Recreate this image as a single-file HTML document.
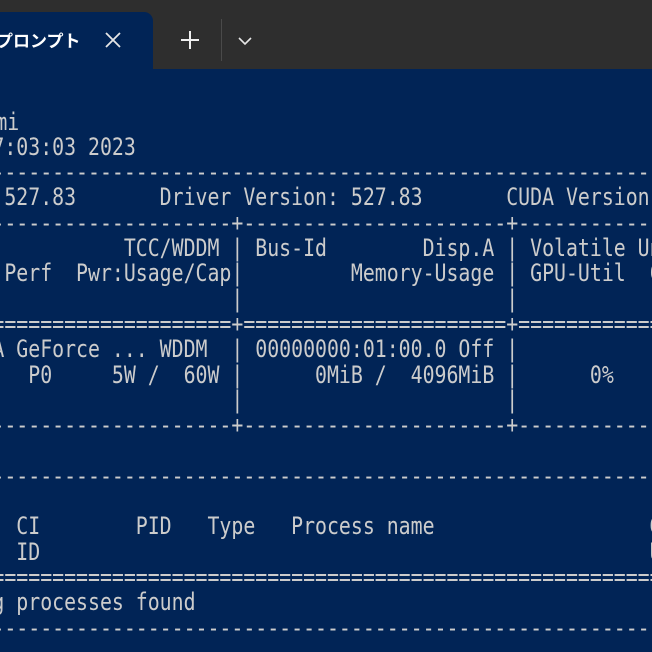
<!DOCTYPE html>
<html><head><meta charset="utf-8"><style>
html,body{margin:0;padding:0;}
body{width:652px;height:652px;overflow:hidden;background:#012456;position:relative;font-family:"DejaVu Sans Mono","Liberation Mono",monospace;}
#wrap{position:absolute;left:0;top:0;width:652px;height:652px;overflow:hidden;}
#bar{position:absolute;left:0;top:0;width:652px;height:69px;background:#2e2e2e;}
#tab{position:absolute;left:-20px;top:12px;width:173px;height:60px;background:#012456;border-radius:9px 9px 0 0;}
#title{position:absolute;left:-4px;top:28px;color:#fff;font:bold 17px "Noto Sans CJK JP",sans-serif;line-height:24px;white-space:nowrap;}
.l{position:absolute;left:-151.4px;height:25.3px;line-height:25.3px;font-size:24px;color:#cccccc;white-space:pre;transform:scaleX(0.827);transform-origin:0 0;}
</style></head><body><div id="wrap">
<div id="bar"></div>
<div id="tab"></div>
<div id="title">プロンプト</div>
<svg style="position:absolute;left:0;top:0" width="652" height="69">
<path d="M106 33 L120 47 M120 33 L106 47" stroke="#e6e6e6" stroke-width="1.8" fill="none"/>
<path d="M190 31 V49 M181 40 H199" stroke="#f0f0f0" stroke-width="2" fill="none"/>
<line x1="221.5" y1="19" x2="221.5" y2="61" stroke="#4a4a4a" stroke-width="1"/>
<path d="M239 38 L245 44 L251 38" stroke="#e6e6e6" stroke-width="1.6" fill="none"/>
</svg>
<div class="l" style="top:109.5px;left:-160px">C:\> nvidia-smi</div>
<div class="l" style="top:134.8px">Fri Mar 17 17:03:03 2023</div>
<div class="l" style="top:160.1px">+-----------------------------------------------------------------------------+</div>
<div class="l" style="top:185.4px">| NVIDIA-SMI 527.83       Driver Version: 527.83       CUDA Version: 12.0     |</div>
<div class="l" style="top:210.7px">|-------------------------------+----------------------+----------------------+</div>
<div class="l" style="top:236px">| GPU  Name            TCC/WDDM | Bus-Id        Disp.A | Volatile Uncorr. ECC |</div>
<div class="l" style="top:261.3px">| Fan  Temp  Perf  Pwr:Usage/Cap|         Memory-Usage | GPU-Util  Compute M. |</div>
<div class="l" style="top:286.6px">|                               |                      |               MIG M. |</div>
<div class="l" style="top:311.9px">|===============================+======================+======================|</div>
<div class="l" style="top:337.2px">|   0  NVIDIA GeForce ... WDDM  | 00000000:01:00.0 Off |                  N/A |</div>
<div class="l" style="top:362.5px">| N/A   45C    P0     5W /  60W |      0MiB /  4096MiB |      0%      Default |</div>
<div class="l" style="top:387.8px">|                               |                      |                  N/A |</div>
<div class="l" style="top:413.1px">+-------------------------------+----------------------+----------------------+</div>
<div class="l" style="top:463.7px">+-----------------------------------------------------------------------------+</div>
<div class="l" style="top:489px">| Processes:                                                                  |</div>
<div class="l" style="top:514.3px">|  GPU   GI   CI        PID   Type   Process name                  GPU Memory |</div>
<div class="l" style="top:539.6px">|        ID   ID                                                   Usage      |</div>
<div class="l" style="top:564.9px">|=============================================================================|</div>
<div class="l" style="top:590.2px">|  No running processes found                                                 |</div>
<div class="l" style="top:615.5px">+-----------------------------------------------------------------------------+</div>
</div></body></html>
